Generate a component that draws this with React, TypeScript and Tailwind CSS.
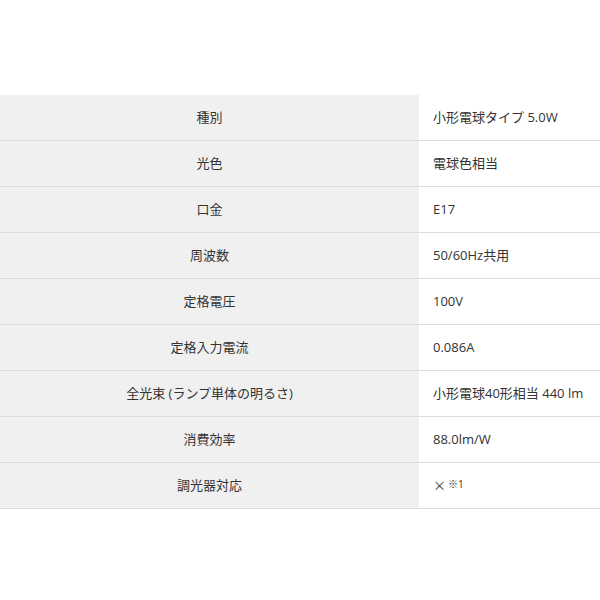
import React from "react";

const rows: [string, React.ReactNode][] = [
  ["種別", "小形電球タイプ 5.0W"],
  ["光色", "電球色相当"],
  ["口金", "E17"],
  ["周波数", "50/60Hz共用"],
  ["定格電圧", "100V"],
  ["定格入力電流", "0.086A"],
  ["全光束 (ランプ単体の明るさ)", "小形電球40形相当 440 lm"],
  ["消費効率", "88.0lm/W"],
  [
    "調光器対応",
    <span>
      <span style={{ fontFamily: '"Noto Sans CJK JP", sans-serif' }}>×</span>
      <sup className="text-[10px] ml-[2px] relative top-[-2px]">※1</sup>
    </span>,
  ],
];

export default function App() {
  return (
    <div
      className="w-[600px] h-[600px] bg-white pt-[95px] text-[13px] text-[#333]"
      style={{ fontFamily: '"Open Sans", "Noto Sans CJK JP", sans-serif' }}
    >
      {rows.map(([k, v], i) => (
        <div key={i} className="flex h-[46px] border-b border-[#dcdcdc]">
          <div className="w-[419px] bg-[#f0f0f0] flex items-center justify-center">
            {k}
          </div>
          <div className="flex-1 flex items-center pl-[14px]">{v}</div>
        </div>
      ))}
    </div>
  );
}
